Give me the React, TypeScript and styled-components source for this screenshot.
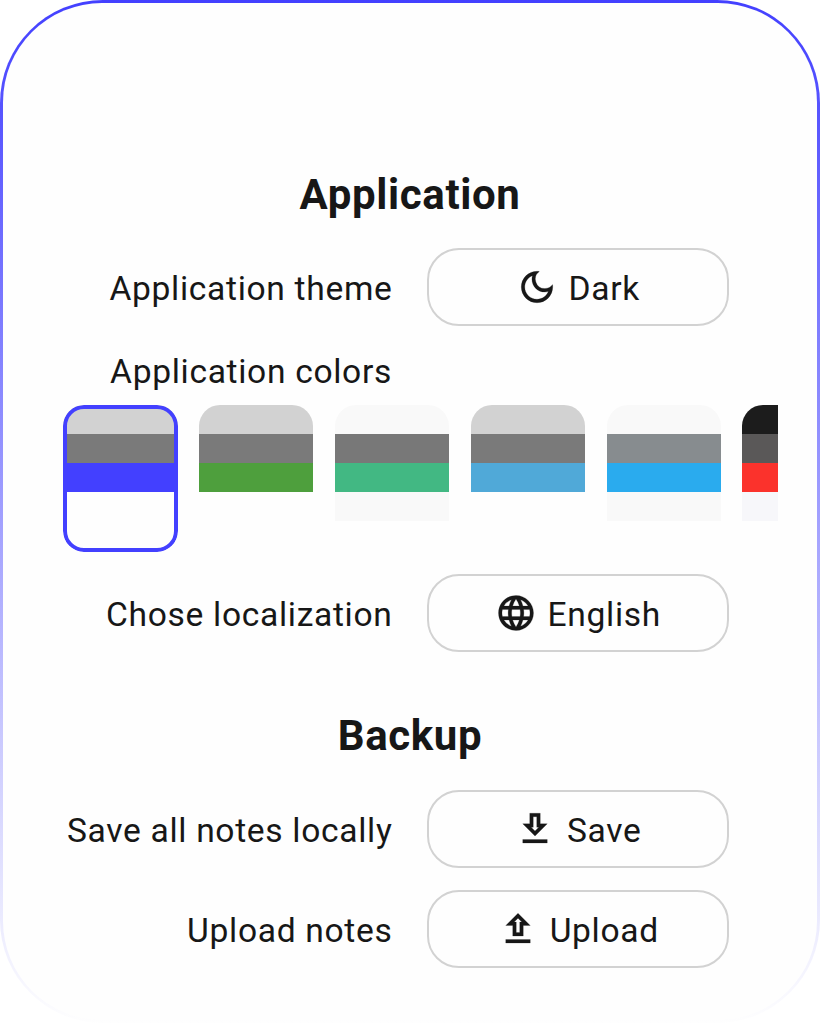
import React from "react";
import styled, { createGlobalStyle } from "styled-components";

const GlobalStyle = createGlobalStyle`
  * { box-sizing: border-box; }
  body { margin: 0; background: #ffffff; }
`;

const Frame = styled.main`
  width: 820px;
  height: 1023px;
  padding: 3px;
  border-radius: 103px;
  background: linear-gradient(180deg, #4340ff 0%, #fefefe 100%);
  font-family: Roboto, "Liberation Sans", sans-serif;
  color: #171717;
`;

const Panel = styled.div`
  display: flex;
  flex-direction: column;
  height: 100%;
  padding: 166px 39px 0 60px;
  border-radius: 99px;
  background: #fefefe;
`;

const Heading = styled.h2<{ $gapTop?: number; $gapBottom?: number }>`
  margin: ${(p) => p.$gapTop ?? 0}px 21px ${(p) => p.$gapBottom ?? 28}px 0;
  font-size: 42px;
  line-height: 51px;
  font-weight: 700;
  letter-spacing: 0.65px;
  text-align: center;
`;

const Row = styled.div<{ $gapTop?: number }>`
  display: grid;
  grid-template-columns: 329.5px 302px;
  column-gap: 34.5px;
  align-items: center;
  height: 78px;
  margin-top: ${(p) => p.$gapTop ?? 0}px;
`;

const Label = styled.span`
  font-size: 33.6px;
  line-height: 40px;
  letter-spacing: 0.68px;
  text-align: right;
  white-space: nowrap;
  padding-top: 3px;
`;

const SwatchTitle = styled(Label)`
  width: 329px;
  margin-top: 23px;
`;

const Button = styled.button`
  display: flex;
  align-items: center;
  justify-content: center;
  gap: 10.5px;
  height: 78px;
  padding: 0;
  border: 2px solid #d2d2d2;
  border-radius: 32px;
  background: transparent;
  color: inherit;
  font: 400 33.6px/40px Roboto, "Liberation Sans", sans-serif;
  letter-spacing: 0.68px;
  span { padding-top: 3px; }
`;

const Icon = styled.svg`
  width: 42px;
  height: 42px;
  fill: currentColor;
  stroke: currentColor;
  stroke-width: 0.12px;
`;

const Swatches = styled.div`
  display: flex;
  gap: 21.3px;
  width: 715px;
  height: 147px;
  margin-top: 13px;
  overflow: hidden;
`;

const Swatch = styled.div<{ $selected?: boolean }>`
  position: relative;
  flex: 0 0 114.6px;
  height: 146.5px;
  border-radius: 21px;
  overflow: hidden;
  &::after {
    content: "";
    position: absolute;
    inset: 0;
    border-radius: 21px;
    border: ${(p) => (p.$selected ? "4px solid #4340ff" : "none")};
  }
`;

const Stripe = styled.div<{ $color: string }>`
  height: 29.1px;
  background: ${(p) => p.$color};
`;

const palettes = [
  ["#d2d2d2", "#7a7a7a", "#4340ff", "#fefefe"],
  ["#d2d2d2", "#7a7a7a", "#4e9f3d", "#fefefe"],
  ["#f9f9f9", "#787878", "#42b883", "#f9f9f9"],
  ["#d2d2d2", "#7a7a7a", "#50a9d8", "#fefefe"],
  ["#f9f9f9", "#878c8f", "#2aabee", "#f9f9f9"],
  ["#1c1c1c", "#5a5858", "#fb322c", "#f7f7fa"],
];

const paths = {
  moon: "M9.37 5.51c-.18.64-.27 1.31-.27 1.99 0 4.08 3.32 7.4 7.4 7.4.68 0 1.35-.09 1.99-.27C17.45 17.19 14.93 19 12 19c-3.86 0-7-3.14-7-7 0-2.93 1.81-5.45 4.37-6.49zM12 3a9 9 0 1 0 9 9c0-.46-.04-.92-.1-1.36a5.389 5.389 0 0 1-4.4 2.26 5.403 5.403 0 0 1-3.14-9.8c-.44-.06-.9-.1-1.36-.1z",
  globe: "M11.99 2C6.47 2 2 6.48 2 12s4.47 10 9.99 10C17.52 22 22 17.52 22 12S17.52 2 11.99 2zm6.93 6h-2.95a15.65 15.65 0 0 0-1.38-3.56A8.03 8.03 0 0 1 18.92 8zM12 4.04c.83 1.2 1.48 2.53 1.91 3.96h-3.82c.43-1.43 1.08-2.76 1.91-3.96zM4.26 14C4.1 13.36 4 12.69 4 12s.1-1.36.26-2h3.38c-.08.66-.14 1.32-.14 2s.06 1.34.14 2H4.26zm.82 2h2.95c.32 1.25.78 2.45 1.38 3.56A7.987 7.987 0 0 1 5.08 16zm2.95-8H5.08a7.987 7.987 0 0 1 4.33-3.56A15.65 15.65 0 0 0 8.03 8zM12 19.96c-.83-1.2-1.48-2.53-1.91-3.96h3.82c-.43 1.43-1.08 2.76-1.91 3.96zM14.34 14H9.66c-.09-.66-.16-1.32-.16-2s.07-1.35.16-2h4.68c.09.65.16 1.32.16 2s-.07 1.34-.16 2zm.25 5.56c.6-1.11 1.06-2.31 1.38-3.56h2.95a8.03 8.03 0 0 1-4.33 3.56zM16.36 14c.08-.66.14-1.32.14-2s-.06-1.34-.14-2h3.38c.16.64.26 1.31.26 2s-.1 1.36-.26 2h-3.38z",
  download: "M19 9h-4V3H9v6H5l7 7 7-7zm-8 2V5h2v6h1.17L12 13.17 9.83 11H11zm-6 7h14v2H5z",
  upload: "M9 16h6v-6h4l-7-7-7 7h4v6zm3-10.17L14.17 8H13v6h-2V8H9.83L12 5.83zM5 18h14v2H5z",
};

type SettingProps = { label: string; value: string; icon: keyof typeof paths; gapTop?: number };

function Setting({ label, value, icon, gapTop }: SettingProps) {
  return (
    <Row $gapTop={gapTop}>
      <Label>{label}</Label>
      <Button type="button">
        <Icon viewBox="0 0 24 24" aria-hidden="true">
          <path d={paths[icon]} />
        </Icon>
        <span>{value}</span>
      </Button>
    </Row>
  );
}

export default function App() {
  return (
    <>
      <GlobalStyle />
      <Frame>
        <Panel>
          <Heading>Application</Heading>
          <Setting label="Application theme" value="Dark" icon="moon" />
          <SwatchTitle>Application colors</SwatchTitle>
          <Swatches>
            {palettes.map((colors, i) => (
              <Swatch key={i} $selected={i === 0}>
                {colors.map((color, j) => (
                  <Stripe key={j} $color={color} />
                ))}
              </Swatch>
            ))}
          </Swatches>
          <Setting label="Chose localization" value="English" icon="globe" gapTop={22} />
          <Heading $gapTop={58} $gapBottom={29}>Backup</Heading>
          <Setting label="Save all notes locally" value="Save" icon="download" />
          <Setting label="Upload notes" value="Upload" icon="upload" gapTop={22} />
        </Panel>
      </Frame>
    </>
  );
}
